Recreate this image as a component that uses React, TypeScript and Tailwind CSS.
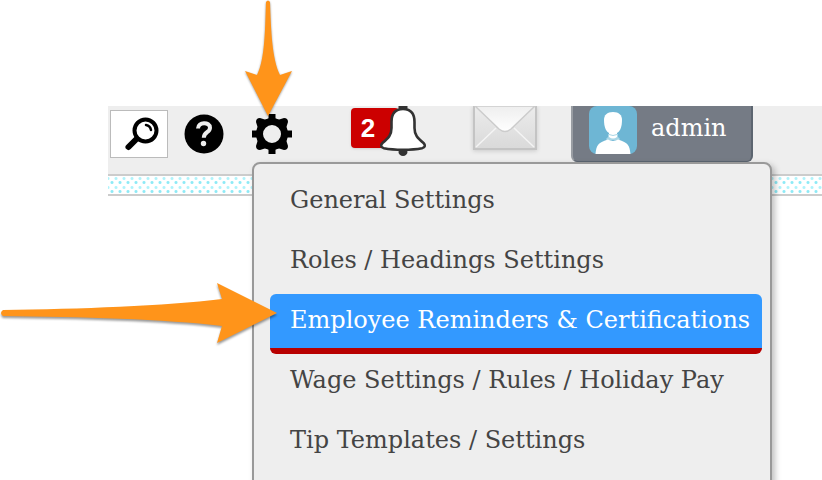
import React from 'react';

interface SettingsLink {
  label: string;
  active?: boolean;
}

const settingsLinks: SettingsLink[] = [
  { label: 'General Settings' },
  { label: 'Roles / Headings Settings' },
  { label: 'Employee Reminders & Certifications', active: true },
  { label: 'Wage Settings / Rules / Holiday Pay' },
  { label: 'Tip Templates / Settings' },
];

function SearchIcon() {
  return (
    <svg className="h-9 w-9" viewBox="0 0 36 36" fill="none" stroke="#000" strokeLinecap="round">
      <circle cx="22.5" cy="14.5" r="11" strokeWidth="4" />
      <path d="M23 9a6 6 0 0 1 5 5" strokeWidth="2.5" />
      <path d="M13 23.5 5.5 31" strokeWidth="6" />
    </svg>
  );
}

function HelpIcon() {
  return (
    <svg className="h-10 w-10" viewBox="0 0 40 40" fill="none">
      <circle cx="20" cy="20" r="19.5" fill="#000" />
      <path
        d="M14 14.5c0-7 12-7 12-.8 0 4.8-6.2 4.3-6.2 10"
        stroke="#eee"
        strokeWidth="4"
      />
      <circle cx="19.5" cy="29.5" r="2.7" fill="#eee" />
    </svg>
  );
}

function GearIcon() {
  return (
    <svg className="h-10 w-10" viewBox="0 0 40 40" fill="#000">
      <path d="M16.5 0h7v6h-7zM16.5 34h7v6h-7zM0 16.5h6v7H0zM34 16.5h6v7h-6z" />
      <path d="M8 4l8 2.500L6.500 16 4 8q0-4 4-4zM32 4l-8 2.500 9.500 9.500L36 8q0-4-4-4zM8 36l8-2.500L6.500 24 4 32q0 4 4 4zM32 36l-8-2.500 9.500-9.500L36 32q0 4-4 4z" />
      <circle cx="20" cy="20" r="12.5" fill="none" stroke="#000" strokeWidth="7" />
    </svg>
  );
}

function BellIcon() {
  return (
    <svg className="h-[52px] w-12" viewBox="0 0 48 52">
      <ellipse cx="24" cy="46" rx="4.5" ry="4" fill="#333" />
      <rect x="19.5" y="-2" width="9" height="6" rx="2" fill="#333" />
      <path
        d="M24 3C15 3 12.5 9 12.5 16v6c0 7-3 10-9 15-2 2-2 4.5 1.5 5.3 10 2 28 2 38 0 3.5-.8 3.5-3.3 1.5-5.3-6-5-9-8-9-15v-6C35.500 9 33 3 24 3z"
        fill="#fff"
        stroke="#333"
        strokeWidth="2.6"
      />
    </svg>
  );
}

function MailIcon() {
  return (
    <svg className="h-[46px] w-[66px] drop-shadow-sm" viewBox="0 0 66 46">
      <defs>
        <linearGradient id="mailFlap" x1="0" y1="0" x2="0" y2="1">
          <stop offset="0" stopColor="#eee" />
          <stop offset="1" stopColor="#fff" />
        </linearGradient>
        <linearGradient id="mailBody" x1="0" y1="0" x2="0" y2="1">
          <stop offset="0" stopColor="#eee" />
          <stop offset="1" stopColor="#d9d9d9" />
        </linearGradient>
      </defs>
      <rect x="1" y="-4" width="62" height="47" fill="url(#mailBody)" stroke="#c4c4c4" strokeWidth="2" />
      <path d="M3 41 23 22M61 41 41 22" stroke="#f4f4f4" strokeWidth="1.5" />
      <path d="M2 0 26 23q6 5 12 0L62 0z" fill="url(#mailFlap)" stroke="#ccc" strokeWidth="1.5" />
    </svg>
  );
}

function Avatar() {
  return (
    <svg className="h-12 w-12" viewBox="0 0 48 48">
      <rect width="48" height="48" rx="8" fill="#6eb6d4" />
      <path d="M19 28h10v3l2 2-2 3-5-2-5 2-2-3 2-2z" fill="#a9d6e6" />
      <path d="M20 25h8v6q-4 3-8 0z" fill="#fff" />
      <path
        d="M24 6c6 0 9 3 9 8 0 7-2 14-9 14s-9-7-9-14c0-5 3-8 9-8z"
        fill="#fff"
      />
      <path d="M20 28.5q4 2 8 0" fill="none" stroke="#a9d6e6" />
      <path d="M6.5 48c1-9 2-11 12.5-14.500q5 3 10 0C39.5 37 40.5 39 41.5 48z" fill="#fff" />
    </svg>
  );
}

function Toolbar() {
  return (
    <header className="flex h-[68px] items-start overflow-hidden bg-[#eee]">
      <button
        aria-label="Search"
        className="mt-1 ml-0.5 flex h-12 w-[58px] items-center justify-end border border-[#bbb] bg-white pr-2"
      >
        <SearchIcon />
      </button>
      <button aria-label="Help" className="mt-2 ml-4">
        <HelpIcon />
      </button>
      <button aria-label="Settings" className="mt-2 ml-7">
        <GearIcon />
      </button>
      <button aria-label="Notifications" className="ml-[59px] flex">
        <span className="mt-0.5 -mr-5 h-10 w-12 rounded bg-[#c00] pr-3.5 text-center font-['Liberation_Sans',sans-serif] text-[26px] leading-10 font-bold text-white shadow-sm">
          2
        </span>
        <BellIcon />
      </button>
      <button aria-label="Messages" className="ml-[46px]">
        <MailIcon />
      </button>
      <button className="ml-8 flex h-14 w-[182px] gap-3.5 rounded-b-md border-x-2 border-b border-l-[#999da3] border-r-[#5c6570] border-b-[#5c6570] bg-[#757b85] pl-4 text-white">
        <Avatar />
        <span className="pt-1.5 leading-8">admin</span>
      </button>
    </header>
  );
}

function SettingsMenu() {
  return (
    <nav className="absolute top-14 left-36 h-96 w-[520px] rounded-lg border-2 border-[#999] bg-[#eee] px-4 pt-2.5 text-[#444] shadow-[3px_3px_6px_rgba(0,0,0,0.25)]">
      {settingsLinks.map(({ label, active }) => (
        <a
          key={label}
          href="#"
          className={
            active
              ? 'block h-[60px] w-[492px] rounded-md border-b-[6px] border-[#b80000] bg-[#39f] px-5 leading-[52px] whitespace-nowrap text-white'
              : 'block h-[60px] px-5 leading-[52px] whitespace-nowrap'
          }
        >
          {label}
        </a>
      ))}
    </nav>
  );
}

export default function App() {
  return (
    <div className="relative h-screen overflow-hidden bg-white pt-[106px] pl-[108px] font-['DejaVu_Serif',serif] text-2xl">
      <main className="relative">
        <Toolbar />
        <div className="h-[22px] border-y-2 border-[#ccc] bg-white bg-[radial-gradient(circle,#8eeaf6_1px,transparent_2px),radial-gradient(circle,#b0f3fb_1px,transparent_2px)] bg-size-[8px_9px] bg-position-[0_2px,4px_7px]" />
        <SettingsMenu />
      </main>

      <svg
        className="absolute top-0 left-[244px] h-[118px] w-12 drop-shadow-[0_1px_1px_rgba(0,0,0,0.4)]"
        viewBox="0 0 48 118"
        fill="#ff941a"
      >
        <path d="M22 2q2-3 4 0c1 28 2 57 10 73l12-4-24 45L1 71l12 4c8-16 8-45 9-73z" />
      </svg>
      <svg
        className="absolute top-[280px] left-0 h-16 w-[280px] drop-shadow-[0_2px_1px_rgba(0,0,0,0.4)]"
        viewBox="0 0 280 64"
        fill="#ff941a"
      >
        <path d="M3 30C80 29 165 26 222 19l-5-16 60 30-60 30 5-17C165 39 80 37 3 36q-4-3 0-6z" />
      </svg>
    </div>
  );
}
